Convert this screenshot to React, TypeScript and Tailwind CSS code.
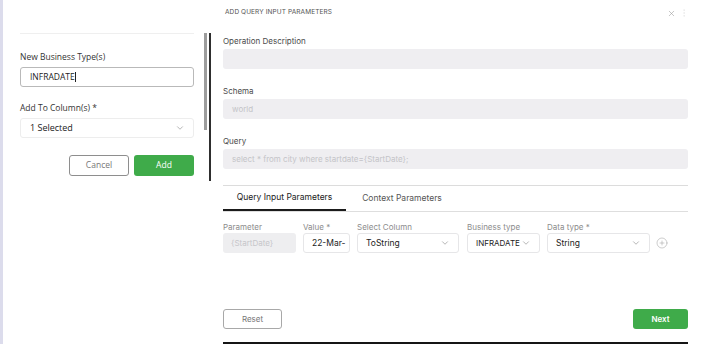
import React from "react";
import { ChevronDown, CirclePlus, X, EllipsisVertical } from "lucide-react";

const leftFont = { fontFamily: '"Open Sans", "Noto Sans", sans-serif' };

function Chevron() {
  return <ChevronDown size={10} strokeWidth={1.5} className="text-[#8a8a8a] shrink-0" />;
}

function Field({ label, value, placeholder }: { label: string; value?: string; placeholder?: boolean }) {
  return (
    <div>
      <p className="text-[8px] leading-[12px] text-[#4a4a4a]">{label}</p>
      <div className="mt-[2px] h-[20px] rounded-[3px] bg-[#efeef1] px-[9px] flex items-center">
        <span className={placeholder ? "text-[8px] text-[#c4c4c8]" : "text-[8px] text-[#333]"}>{value}</span>
      </div>
    </div>
  );
}

function ParamCol({ label, width, children, disabled }: { label: string; width: string; children: React.ReactNode; disabled?: boolean }) {
  return (
    <div className={width}>
      <p className="text-[8px] leading-[12px] text-[#8c8c8c]">{label}</p>
      <div
        className={
          disabled
            ? "h-[20px] rounded-[3px] bg-[#eeeef0] px-[8px] flex items-center overflow-hidden whitespace-nowrap"
            : "h-[20px] rounded-[3px] border border-[#e6e6e8] bg-white px-[8px] flex items-center justify-between overflow-hidden whitespace-nowrap"
        }
      >
        {children}
      </div>
    </div>
  );
}

export default function App() {
  return (
    <div className="flex w-[709px] h-[344px] bg-white overflow-hidden">
      <div className="w-[3px] bg-[#dcdcec]" />

      {/* left panel */}
      <div className="w-[201px] pl-[17px] pr-[10px]" style={leftFont}>
        <div className="mt-[33px] h-px bg-[#efefef]" />
        <p className="mt-[17px] text-[8.5px] leading-[12px] text-[#333]">New Business Type(s)</p>
        <div className="mt-[4px] h-[20px] rounded-[3px] border border-[#b9b9b9] px-[9px] flex items-center">
          <span className="text-[8.5px] text-[#222]">INFRADATE</span>
          <span className="w-px h-[10px] bg-[#222]" />
        </div>
        <p className="mt-[15px] text-[8.5px] leading-[12px] text-[#333]">Add To Column(s) *</p>
        <div className="mt-[4px] h-[20px] rounded-[3px] border border-[#ededed] pl-[9px] pr-[8px] flex items-center justify-between">
          <span className="text-[9px] text-[#222]">1 Selected</span>
          <Chevron />
        </div>
        <div className="mt-[17px] flex justify-end gap-[5px]">
          <button className="w-[60px] h-[21px] rounded-[3px] border border-[#8e8e8e] bg-white text-[8.5px] text-[#777]">
            Cancel
          </button>
          <button className="w-[60px] h-[21px] rounded-[3px] bg-[#3fab4a] text-[8.5px] text-white">Add</button>
        </div>
      </div>

      {/* scroll bar and divider */}
      <div className="w-[3px] pt-[33px]">
        <div className="h-[97px] bg-[#9d9d9d]" />
      </div>
      <div className="w-[2px]" />
      <div className="w-[2px] pt-[33px]">
        <div className="h-[148px] bg-[#2e2e2e]" />
      </div>

      {/* right panel */}
      <div className="flex-1 pl-[12px] pr-[21px]" style={{ fontFamily: 'Inter, "Noto Sans", sans-serif' }}>
        <div className="h-[26px] flex items-center justify-between">
          <span className="ml-[2px] text-[6.5px] tracking-[0.1px] text-[#555]">ADD QUERY INPUT PARAMETERS</span>
          <div className="flex items-center gap-[3px] -mr-[1px]">
            <X size={9} strokeWidth={1.5} className="text-[#9a9a9a]" />
            <EllipsisVertical size={10} strokeWidth={1} className="text-[#dcdcdc]" />
          </div>
        </div>

        <div className="mt-[9px]">
          <Field label="Operation Description" />
        </div>
        <div className="mt-[16px]">
          <Field label="Schema" value="world" placeholder />
        </div>
        <div className="mt-[16px]">
          <Field label="Query" value="select * from city where startdate={StartDate};" placeholder />
        </div>

        <div className="mt-[16px] h-px bg-[#dcdcdc]" />

        <div className="flex border-b border-[#dedede]">
          <div className="w-[123px] h-[25px] -mb-px border-b-2 border-[#1b1b1b] flex items-center justify-center">
            <span className="text-[8.5px] text-[#222]">Query Input Parameters</span>
          </div>
          <div className="w-[112px] h-[25px] flex items-center justify-center">
            <span className="text-[8.5px] text-[#555]">Context Parameters</span>
          </div>
        </div>

        <div className="mt-[9px] flex items-end">
          <ParamCol label="Parameter" width="w-[73px]" disabled>
            <span className="text-[8px] text-[#c6c6ca]">{"{StartDate}"}</span>
          </ParamCol>
          <div className="w-[7px]" />
          <ParamCol label="Value *" width="w-[47px]">
            <span className="text-[8.5px] text-[#222]">22-Mar-</span>
          </ParamCol>
          <div className="w-[7px]" />
          <ParamCol label="Select Column" width="w-[102px]">
            <span className="text-[8.5px] text-[#222]">ToString</span>
            <Chevron />
          </ParamCol>
          <div className="w-[8px]" />
          <ParamCol label="Business type" width="w-[73px]">
            <span className="text-[8px] text-[#222]">INFRADATE</span>
            <Chevron />
          </ParamCol>
          <div className="w-[7px]" />
          <ParamCol label="Data type *" width="w-[103px]">
            <span className="text-[8.5px] text-[#222]">String</span>
            <Chevron />
          </ParamCol>
          <div className="h-[20px] ml-[6px] flex items-center">
            <CirclePlus size={12} strokeWidth={1} className="text-[#9a9a9a]" />
          </div>
        </div>

        <div className="mt-[56px] flex justify-between">
          <button className="w-[59px] h-[20px] rounded-[3px] border border-[#a8a8a8] bg-white text-[8px] text-[#777]">
            Reset
          </button>
          <button className="w-[55px] h-[20px] rounded-[3px] bg-[#3fab4a] text-[8px] font-semibold text-white">
            Next
          </button>
        </div>

        <div className="mt-[13px] h-[3px] bg-[#151515]" />
      </div>
    </div>
  );
}
